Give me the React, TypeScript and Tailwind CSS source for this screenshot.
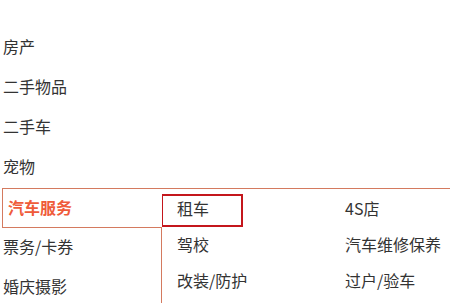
import React from "react";

const left = ["房产", "二手物品", "二手车", "宠物"];
const after = ["票务/卡券", "婚庆摄影"];
const sub = [
  ["租车", "4S店"],
  ["驾校", "汽车维修保养"],
  ["改装/防护", "过户/验车"],
];

export default function App() {
  return (
    <div
      className="relative w-[450px] h-[303px] overflow-hidden bg-white text-[16px] text-[#333]"
      style={{ fontFamily: '"Noto Sans CJK SC", "Noto Sans", sans-serif' }}
    >
      <ul className="pt-[28px] pl-[2px]">
        {left.map((t) => (
          <li key={t} className="h-[40px] flex items-center pl-[1px] pb-[4px]">
            {t}
          </li>
        ))}
        <li className="relative z-10 h-[40px] w-[160px] flex items-center pl-[5px] pb-[3px] border border-r-0 border-[#d47a5f] bg-white font-bold text-[#ef5b3a]">
          汽车服务
        </li>
        {after.map((t) => (
          <li key={t} className="h-[40px] flex items-center pl-[1px] pb-[4px]">
            {t}
          </li>
        ))}
      </ul>
      <div className="absolute left-[161px] top-[188px] w-[400px] h-[200px] border-l border-t border-[#d47a5f] bg-white">
        <div className="-ml-px pt-[5px] flex flex-col gap-[3px]">
          {sub.map((row, i) => (
            <div key={i} className="flex">
              {row.map((t, j) => (
                <div key={t} className="w-[168px]">
                  <span
                    className={
                      "inline-block h-[33px] leading-[25px] pl-[14px] border-2 " +
                      (i === 0 && j === 0
                        ? "w-[82px] border-[#c4161c]"
                        : "border-transparent")
                    }
                  >
                    {t}
                  </span>
                </div>
              ))}
            </div>
          ))}
        </div>
      </div>
    </div>
  );
}
